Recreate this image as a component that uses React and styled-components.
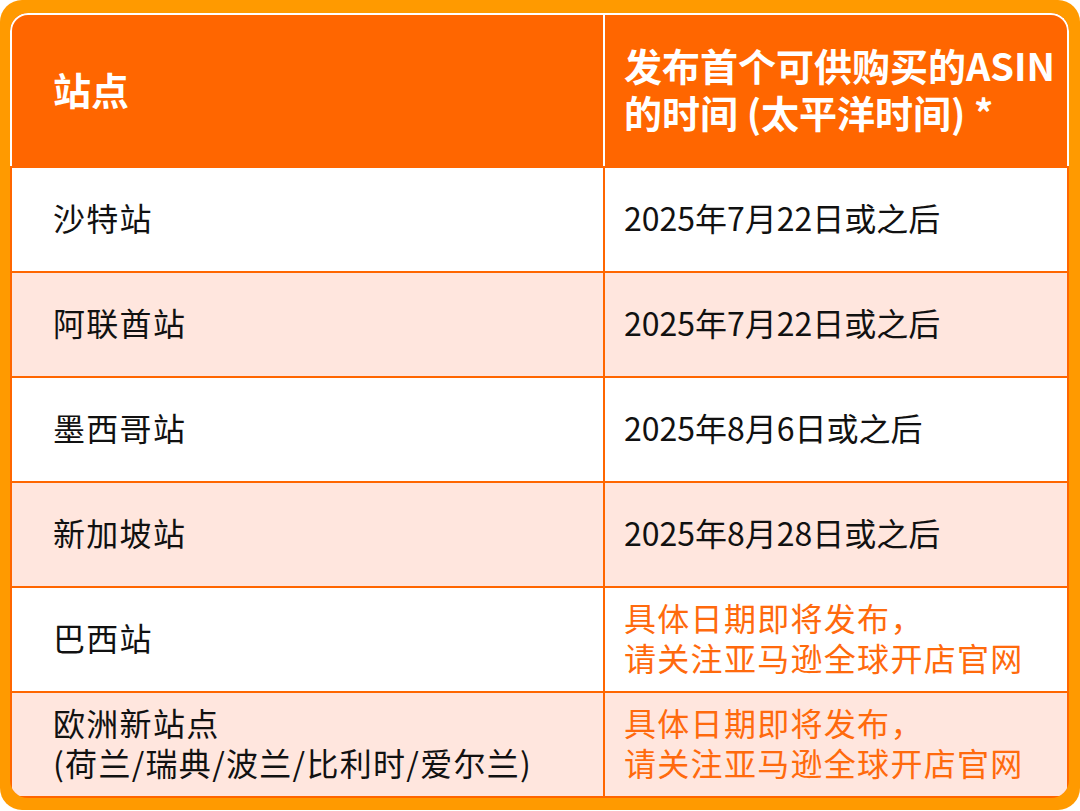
import React from "react";
import styled, { createGlobalStyle } from "styled-components";

const GlobalStyle = createGlobalStyle`
  html, body {
    margin: 0;
    padding: 0;
    background: #ffffff;
  }
  body {
    font-family: "Noto Sans CJK SC", "Noto Sans", sans-serif;
  }
`;

const rows = [
  { site: ["沙特站"], date: ["2025年7月22日或之后"] },
  { site: ["阿联酋站"], date: ["2025年7月22日或之后"], alt: true },
  { site: ["墨西哥站"], date: ["2025年8月6日或之后"] },
  { site: ["新加坡站"], date: ["2025年8月28日或之后"], alt: true },
  {
    site: ["巴西站"],
    date: ["具体日期即将发布，", "请关注亚马逊全球开店官网"],
    pending: true,
  },
  {
    site: ["欧洲新站点", "(荷兰/瑞典/波兰/比利时/爱尔兰)"],
    date: ["具体日期即将发布，", "请关注亚马逊全球开店官网"],
    pending: true,
    alt: true,
  },
];

const App = () => {
  return (
    <>
      <GlobalStyle />
      <Frame>
        <Table>
          <HeaderRow>
            <HeadCell>站点</HeadCell>
            <HeadCell $right>
              <span>发布首个可供购买的ASIN</span>
              <span>的时间 (太平洋时间) *</span>
            </HeadCell>
          </HeaderRow>
          {rows.map((row, i) => (
            <Row key={i} $last={i === rows.length - 1}>
              <Cell $alt={row.alt} $spaced>
                {row.site.map((line) => (
                  <span key={line}>{line}</span>
                ))}
              </Cell>
              <Cell
                $alt={row.alt}
                $right
                $pending={row.pending}
                $spaced={row.pending}
              >
                {row.date.map((line) => (
                  <span key={line}>{line}</span>
                ))}
              </Cell>
            </Row>
          ))}
        </Table>
      </Frame>
    </>
  );
};

export default App;

const Frame = styled.div`
  box-sizing: border-box;
  width: 1080px;
  height: 810px;
  padding: 13px 11px 12px 10px;
  background: #ff9a00;
  border-radius: 22px;
`;

const Table = styled.div`
  display: flex;
  flex-direction: column;
  height: 100%;
  border-radius: 18px;
  overflow: hidden;
  background: #ff6600;
`;

const HeaderRow = styled.div`
  display: grid;
  grid-template-columns: 591px 1fr;
  column-gap: 2px;
  height: 153px;
  box-sizing: border-box;
  border: 2px solid #ffffff;
  border-bottom: none;
  border-radius: 18px 18px 0 0;
  background: #ffffff;
  overflow: hidden;
`;

const HeadCell = styled.div`
  display: flex;
  flex-direction: column;
  justify-content: center;
  background: #ff6600;
  color: #ffffff;
  font-size: 38px;
  font-weight: 700;
  line-height: 47px;
  padding-left: ${(p) => (p.$right ? "19px" : "41px")};
  padding-bottom: 5px;
  white-space: nowrap;
`;

const Row = styled.div`
  display: grid;
  grid-template-columns: 591px 1fr;
  column-gap: 2px;
  height: 105px;
  box-sizing: border-box;
  padding: 2px 2px ${(p) => (p.$last ? "2px" : "0")} 2px;
  flex: ${(p) => (p.$last ? "1" : "none")};
`;

const Cell = styled.div`
  display: flex;
  flex-direction: column;
  justify-content: center;
  background: ${(p) => (p.$alt ? "#ffe6de" : "#ffffff")};
  color: ${(p) => (p.$pending ? "#ff6a0d" : "#111111")};
  font-size: 32px;
  line-height: 40px;
  letter-spacing: ${(p) => (p.$spaced ? "1.3px" : "0")};
  padding-left: ${(p) => (p.$right ? "19px" : "41px")};
  padding-bottom: 5px;
  white-space: nowrap;
`;
